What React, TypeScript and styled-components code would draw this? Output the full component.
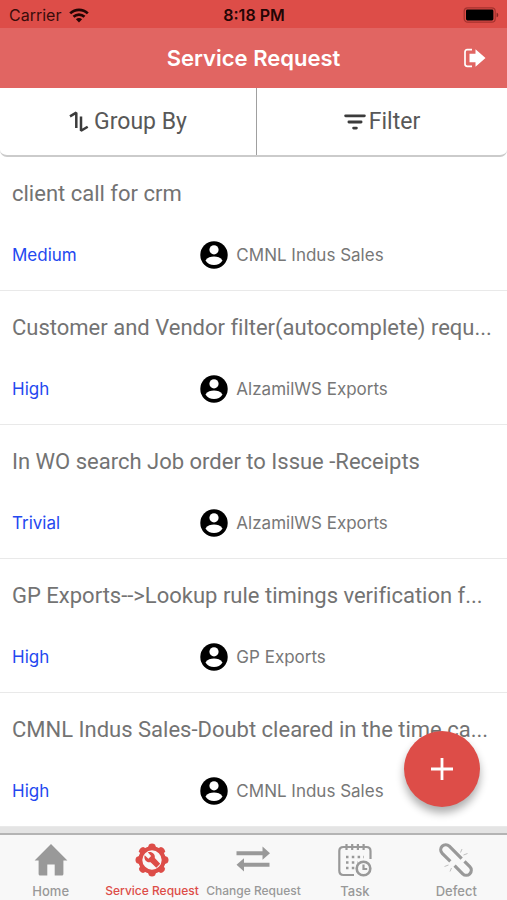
import React from "react";
import styled, { createGlobalStyle } from "styled-components";

const GlobalStyle = createGlobalStyle`
  *, *::before, *::after { box-sizing: border-box; }
  body { margin: 0; background: #fff; font-family: Inter, "Liberation Sans", sans-serif; }
  button, a { font-family: inherit; }
`;

const Screen = styled.div`
  position: relative;
  display: flex;
  flex-direction: column;
  height: 100vh;
  overflow: hidden;
  background: #fff;
`;

const StatusBar = styled.div`
  display: grid;
  grid-template-columns: 1fr auto 1fr;
  align-items: center;
  height: 28px;
  flex: none;
  padding: 2px 8px 0 9px;
  background: #dd4d48;
  color: #3a0c0a;
  font-size: 16px;
  line-height: 20px;
`;

const Carrier = styled.div`
  display: flex;
  align-items: center;
  gap: 8px;
`;

const Clock = styled.time`
  color: #240504;
  font-weight: 600;
`;

const BatterySlot = styled.div`
  display: flex;
  justify-content: flex-end;
`;

const Header = styled.header`
  display: grid;
  grid-template-columns: 1fr auto 1fr;
  align-items: center;
  height: 60px;
  flex: none;
  padding: 0 21px;
  background: #e16562;
  color: #fff;
`;

const Title = styled.h1`
  grid-column: 2;
  margin: 0;
  font-size: 22px;
  line-height: 28px;
  font-weight: 600;
`;

const IconButton = styled.button`
  display: flex;
  justify-self: end;
  padding: 0;
  border: 0;
  background: none;
  color: inherit;
`;

const Toolbar = styled.div`
  display: grid;
  grid-template-columns: 51fr 50fr;
  height: 69px;
  flex: none;
  border-bottom: 2px solid #cbcbcb;
  border-radius: 0 0 7px 7px;
`;

const ToolButton = styled.button<{ $gap: number }>`
  display: flex;
  align-items: center;
  justify-content: center;
  gap: ${(p) => p.$gap}px;
  padding: 1px 0 0;
  border: 0;
  background: none;
  color: #585858;
  font-family: Roboto, Inter, sans-serif;
  font-size: 23px;
  line-height: 28px;

  & + & { border-left: 1px solid #a0a0a0; }
`;

const List = styled.ul`
  flex: 1;
  min-height: 0;
  margin: 0;
  padding: 0;
  overflow: hidden;
  list-style: none;
  background: #e4e4e4;
`;

const Item = styled.li`
  display: flex;
  flex-direction: column;
  gap: 33px;
  height: 134px;
  padding: 23px 12px 0;
  border-bottom: 1px solid #e9e9e9;
  background: #fff;
`;

const Subject = styled.div`
  overflow: hidden;
  color: #737373;
  font-family: Roboto, Inter, sans-serif;
  font-size: 22px;
  line-height: 28px;
  font-variant-ligatures: none;
  white-space: nowrap;
`;

const Meta = styled.div`
  display: grid;
  grid-template-columns: 39% 1fr;
  align-items: center;
  font-size: 17px;
  line-height: 28px;
`;

const Priority = styled.span`
  color: #2448f0;
`;

const Owner = styled.span`
  display: flex;
  align-items: center;
  gap: 8px;
  color: #777;
`;

const AddButton = styled.button`
  position: absolute;
  right: 27px;
  bottom: 93px;
  display: flex;
  align-items: center;
  justify-content: center;
  width: 76px;
  height: 76px;
  padding: 0;
  border: 0;
  border-radius: 50%;
  background: #dd4d48;
  color: #fff;
  box-shadow: 0 6px 9px rgba(0, 0, 0, 0.32);
`;

const TabBar = styled.nav`
  display: grid;
  grid-template-columns: repeat(5, 1fr);
  height: 67px;
  flex: none;
  border-top: 2px solid #b4b4b4;
  background: #f8f8f8;
`;

const Tab = styled.a<{ $active?: boolean; $compact?: boolean }>`
  display: flex;
  flex-direction: column;
  align-items: center;
  gap: 6px;
  min-width: 0;
  padding-top: 8px;
  color: ${(p) => (p.$active ? "#dd4d48" : "#999")};
  font-size: ${(p) => (p.$compact ? 12 : 13)}px;
  line-height: 16px;
  font-weight: 500;
  text-decoration: none;
  white-space: nowrap;
`;

const WifiIcon = () => (
  <svg width="20" height="15" viewBox="0 0 20 15" fill="none" stroke="#240504" strokeWidth="2.7" aria-hidden="true">
    <path d="M1.2 5.4C6.2.6 13.8.6 18.8 5.4" />
    <path d="M4.5 8.8C7.7 5.8 12.3 5.8 15.5 8.8" />
    <path d="M10 14.4 6.9 11.2C8.6 9.7 11.4 9.7 13.1 11.2Z" fill="#240504" stroke="none" />
  </svg>
);

const BatteryIcon = () => (
  <svg width="36" height="16" viewBox="0 0 36 16" aria-hidden="true">
    <rect x="1.2" y=".8" width="31" height="14.4" rx="3.5" fill="none" stroke="#a5322e" strokeWidth="1.2" />
    <rect x="3" y="2.6" width="27.4" height="10.8" rx="1.4" fill="#000" />
    <path d="M33.6 5.7c2.2.5 2.2 4.1 0 4.6z" fill="#852522" />
  </svg>
);

const ExitIcon = () => (
  <svg width="23" height="20" viewBox="0 0 23 20" aria-hidden="true">
    <path d="M9 1.7H4.3Q2 1.7 2 4v12q0 2.3 2.3 2.3H9" fill="none" stroke="#fff" strokeWidth="1.7" />
    <path d="M6.5 5.7h6V1.2L22.5 10l-10 8.8v-4.5h-6z" fill="#fff" />
  </svg>
);

const SortIcon = () => (
  <svg width="20" height="22" viewBox="0 0 20 22" fill="none" stroke="#3b3b3b" strokeWidth="2.5" strokeLinejoin="bevel" aria-hidden="true">
    <path d="M1 5.4 7.3 1.7V17" />
    <path d="M12 5.6v14.2l6.7-4.1" />
  </svg>
);

const FilterIcon = () => (
  <svg width="22" height="16" viewBox="0 0 22 16" fill="none" stroke="#3b3b3b" strokeWidth="2.8" strokeLinecap="round" aria-hidden="true">
    <path d="M1.6 1.8h18.8M4.9 8h12.2M9.6 14.1h2.8" />
  </svg>
);

const PersonIcon = () => (
  <svg width="28" height="28" viewBox="0 0 28 28" aria-hidden="true">
    <circle cx="14" cy="14" r="13.7" fill="#000" />
    <circle cx="14" cy="8.8" r="4.6" fill="#fff" />
    <path d="M5.5 19.4C7.2 16.6 11 15.6 14 15.6s6.8 1 8.5 3.8C20.7 22.3 17.5 24 14 24s-6.7-1.7-8.5-4.6z" fill="#fff" />
  </svg>
);

const PlusIcon = () => (
  <svg width="24" height="24" viewBox="0 0 24 24" fill="none" stroke="currentColor" strokeWidth="2.8" aria-hidden="true">
    <path d="M12 1v22M1 12h22" />
  </svg>
);

const HomeIcon = () => (
  <svg width="34" height="34" viewBox="0 0 34 34" aria-hidden="true">
    <path d="M17 1 .6 17.5h4V31q0 1.5 1.5 1.5h7.2V21.5h7.4v11h7.2q1.5 0 1.5-1.5V17.5h4z" fill="currentColor" />
  </svg>
);

const GearIcon = () => (
  <svg width="34" height="34" viewBox="0 0 34 34" fill="none" aria-hidden="true">
    <circle cx="17" cy="17" r="11.7" stroke="currentColor" strokeWidth="4" />
    <g fill="currentColor">
      {[0, 45, 90, 135, 180, 225, 270, 315].map((a) => (
        <path key={a} d="M12.8 4.8 14 1.5Q17-.6 20 1.5L21.2 4.8z" transform={`rotate(${a} 17 17)`} />
      ))}
      <path d="M9.7 12.3l3.7 3.4 2.7-2.6-3.3-3.8c3.6-1.3 7.7 1.1 7 5.800l5.400 5.600-3.900 4-5.700-5.500c-4 .9-7.200-2.800-5.900-6.900z" />
    </g>
  </svg>
);

const SwapIcon = () => (
  <svg width="34" height="34" viewBox="0 0 34 34" fill="currentColor" aria-hidden="true">
    <path d="M.5 8.3h26V3.600l7.500 6.600-7.500 6.600v-4.500H.5zM33.500 19.700H8V15.200L.5 21.800 8 28.400v-4.600h25.500z" />
  </svg>
);

const TaskIcon = () => (
  <svg width="34" height="34" viewBox="0 0 34 34" fill="none" stroke="currentColor" strokeWidth="2.2" aria-hidden="true">
    <path d="M16 32H5.5q-4.200 0-4.200-4.200V8q0-4 4.200-4h22.800q4.200 0 4.200 4v8" />
    <path d="M8.5 1v6M14.2 1v6M19.9 1v6M25.6 1v6" />
    <path d="M8 14h18M8 19.5h12M8 25h9" strokeDasharray="2.5 3.3" strokeWidth="2.3" />
    <circle cx="25.5" cy="25.5" r="6.8" strokeWidth="2.6" />
    <path d="M25.5 21.5v4.5h3.7" />
  </svg>
);

const DefectIcon = () => (
  <svg width="34" height="34" viewBox="0 0 34 34" fill="none" stroke="currentColor" aria-hidden="true">
    <g transform="rotate(45 17 17)" strokeWidth="3.2">
      <path d="M20 12H2.500a5 5 0 0 0 0 10H14" />
      <path d="M20 22h11.500a5 5 0 0 0 0-10H24" />
    </g>
    <path d="M21.500 9.500 23 6M24.500 12l4-1.500M12.500 25 11 28.500M9.500 22 5.500 23.500" strokeWidth="1" opacity=".6" />
  </svg>
);

const requests = [
  { subject: "client call for crm", priority: "Medium", owner: "CMNL Indus Sales" },
  { subject: "Customer and Vendor filter(autocomplete) requ...", priority: "High", owner: "AlzamilWS Exports" },
  { subject: "In WO search Job order to Issue -Receipts", priority: "Trivial", owner: "AlzamilWS Exports" },
  { subject: "GP Exports-->Lookup rule timings verification f...", priority: "High", owner: "GP Exports" },
  { subject: "CMNL Indus Sales-Doubt cleared in the time ca...", priority: "High", owner: "CMNL Indus Sales" },
];

const tabs = [
  { label: "Home", Icon: HomeIcon },
  { label: "Service Request", Icon: GearIcon, active: true, compact: true },
  { label: "Change Request", Icon: SwapIcon, compact: true },
  { label: "Task", Icon: TaskIcon },
  { label: "Defect", Icon: DefectIcon },
];

export default function App() {
  return (
    <Screen>
      <GlobalStyle />
      <StatusBar>
        <Carrier>Carrier <WifiIcon /></Carrier>
        <Clock>8:18 PM</Clock>
        <BatterySlot><BatteryIcon /></BatterySlot>
      </StatusBar>
      <Header>
        <Title>Service Request</Title>
        <IconButton type="button" aria-label="Log out"><ExitIcon /></IconButton>
      </Header>
      <Toolbar>
        <ToolButton type="button" $gap={5}><SortIcon />Group By</ToolButton>
        <ToolButton type="button" $gap={3}><FilterIcon />Filter</ToolButton>
      </Toolbar>
      <List>
        {requests.map((r) => (
          <Item key={r.subject}>
            <Subject>{r.subject}</Subject>
            <Meta>
              <Priority>{r.priority}</Priority>
              <Owner><PersonIcon />{r.owner}</Owner>
            </Meta>
          </Item>
        ))}
      </List>
      <TabBar>
        {tabs.map(({ label, Icon, active, compact }) => (
          <Tab key={label} href="#" $active={active} $compact={compact} aria-current={active ? "page" : undefined}>
            <Icon />
            {label}
          </Tab>
        ))}
      </TabBar>
      <AddButton type="button" aria-label="Add request"><PlusIcon /></AddButton>
    </Screen>
  );
}
